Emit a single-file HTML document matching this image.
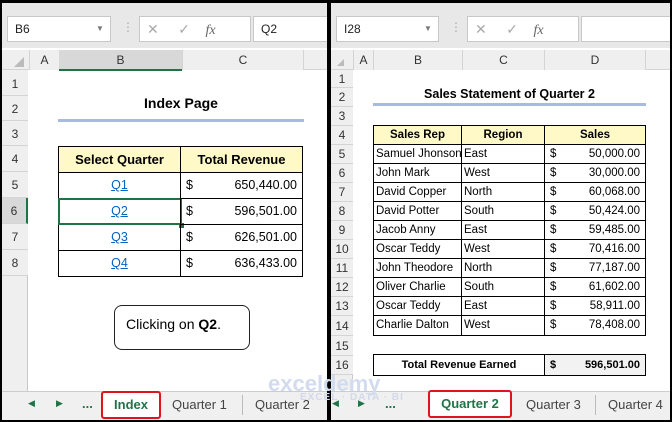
<!DOCTYPE html><html><head><style>
*{margin:0;padding:0;box-sizing:border-box}
body{width:672px;height:422px;background:#000;position:relative;overflow:hidden;font-family:"Liberation Sans",sans-serif;font-size:12px;color:#000}
.a{position:absolute}
.p{position:absolute;background:#fff;overflow:hidden}
.box{position:absolute;background:#fff;border:1px solid #c8c8c8;height:26px;top:13px;font-size:12px;line-height:24px;padding-left:7px;color:#222}
.hdr{background:#efefef;color:#333;text-align:center;font-size:12px}
.rh{position:absolute;background:#efefef;border-bottom:1px solid #d4d4d4;text-align:center;font-size:12px;color:#333}
.c{position:absolute;border:1px solid #000;font-size:12.5px;white-space:nowrap;overflow:hidden}
.tab{position:absolute;font-size:13px;color:#444;top:398px}
</style></head><body>
<div class="p" style="left:2px;top:3px;width:325px;height:417px;background:#fff">
 <div class="a" style="left:0;top:0;width:325px;height:45px;background:#e8e8e8"></div>
 <div class="box" style="left:5px;width:104px">B6<span class="a" style="left:88px;top:0;font-size:8px;color:#777">▼</span></div>
 <div class="a" style="left:120px;top:17px;color:#aaa">⋮</div>
 <div class="box" style="left:137px;width:112px;color:#aaa;font-size:14px">✕ &nbsp;&nbsp;&nbsp; ✓ &nbsp;&nbsp;&nbsp;<i style="font-family:'Liberation Serif';color:#666">fx</i></div>
 <div class="box" style="left:251px;width:80px">Q2</div>
 <div class="a hdr" style="left:0;top:47px;width:325px;height:20px;border-bottom:1px solid #d4d4d4"></div>
 <div class="a hdr" style="left:27px;top:47px;width:30px;height:20px;line-height:20px;border-left:1px solid #d4d4d4">A</div>
 <div class="a" style="left:57px;top:47px;width:123px;height:21px;line-height:20px;text-align:center;background:#d8d8d8;border-bottom:2px solid #217346;color:#333">B</div>
 <div class="a hdr" style="left:180px;top:47px;width:122px;height:20px;line-height:20px;border-left:1px solid #d4d4d4;border-right:1px solid #d4d4d4">C</div>
 <div class="a" style="left:12px;top:54px;width:0;height:0;border-left:10px solid transparent;border-bottom:10px solid #bbb"></div>
 <div class="a" style="left:0;top:67px;width:26px;height:350px;background:#efefef;border-right:1px solid #c8c8c8"></div>
 <div class="rh" style="left:0;top:67px;width:26px;height:26px;line-height:28px">1</div>
 <div class="rh" style="left:0;top:93px;width:26px;height:25px;line-height:26px">2</div>
 <div class="rh" style="left:0;top:118px;width:26px;height:25px;line-height:26px">3</div>
 <div class="rh" style="left:0;top:143px;width:26px;height:26px;line-height:26px">4</div>
 <div class="rh" style="left:0;top:169px;width:26px;height:26px;line-height:26px">5</div>
 <div class="rh" style="left:0;top:195px;width:26px;height:26px;line-height:26px;background:#d8d8d8;border-right:2px solid #217346">6</div>
 <div class="rh" style="left:0;top:221px;width:26px;height:26px;line-height:26px">7</div>
 <div class="rh" style="left:0;top:247px;width:26px;height:26px;line-height:26px">8</div>
 <div class="a" style="left:56px;top:92px;width:246px;text-align:center;font-weight:bold;font-size:14px">Index Page</div>
 <div class="a" style="left:56px;top:116px;width:246px;height:3px;background:#a9b9df"></div>
 <div class="c" style="left:56px;top:143px;width:123px;height:27px;background:#fff9c8;font-weight:bold;text-align:center;line-height:25px;font-size:13px">Select Quarter</div>
 <div class="c" style="left:178px;top:143px;width:123px;height:27px;background:#fff9c8;font-weight:bold;text-align:center;line-height:25px;font-size:13px">Total Revenue</div>
 <div class="c" style="left:56px;top:169px;width:123px;height:27px;text-align:center;line-height:25px;color:#0563c1;text-decoration:underline">Q1</div>
 <div class="c" style="left:56px;top:195px;width:123px;height:27px;text-align:center;line-height:25px;color:#0563c1;text-decoration:underline">Q2</div>
 <div class="c" style="left:56px;top:221px;width:123px;height:27px;text-align:center;line-height:25px;color:#0563c1;text-decoration:underline">Q3</div>
 <div class="c" style="left:56px;top:247px;width:123px;height:27px;text-align:center;line-height:25px;color:#0563c1;text-decoration:underline">Q4</div>
 <div class="a" style="left:56px;top:195px;width:124px;height:27px;border:2px solid #217346"></div>
 <div class="a" style="left:177px;top:220px;width:5px;height:5px;background:#217346"></div>
 <div class="c" style="left:178px;top:169px;width:123px;height:27px;line-height:25px;padding:0 5px"><span>$</span><span style="float:right">650,440.00</span></div>
 <div class="c" style="left:178px;top:195px;width:123px;height:27px;line-height:25px;padding:0 5px"><span>$</span><span style="float:right">596,501.00</span></div>
 <div class="c" style="left:178px;top:221px;width:123px;height:27px;line-height:25px;padding:0 5px"><span>$</span><span style="float:right">626,501.00</span></div>
 <div class="c" style="left:178px;top:247px;width:123px;height:27px;line-height:25px;padding:0 5px"><span>$</span><span style="float:right">636,433.00</span></div>
 <div class="a" style="left:112px;top:302px;width:136px;height:45px;border:1px solid #222;border-radius:8px;padding:10px 11px;font-size:14px">Clicking on <b>Q2</b>.</div>
 <div class="a" style="left:0;top:388px;width:325px;height:29px;background:#f0f0f0;border-top:1px solid #ccc"></div>
 <div class="tab" style="left:26px;top:395px;font-size:9px;color:#217346">◀</div>
 <div class="tab" style="left:54px;top:395px;font-size:9px;color:#217346">▶</div>
 <div class="tab" style="left:80px;top:393px;color:#217346;font-weight:bold">...</div>
 <div class="a" style="left:99px;top:388px;width:60px;height:28px;background:#fff;border:2px solid #e0141e;border-radius:3px;text-align:center;line-height:24px;font-weight:bold;color:#217346;font-size:13px">Index</div>
 <div class="tab" style="left:170px;top:394px">Quarter 1</div>
 <div class="a" style="left:240px;top:392px;width:1px;height:20px;background:#bbb"></div>
 <div class="tab" style="left:253px;top:394px">Quarter 2</div>
</div>
<div class="p" style="left:331px;top:3px;width:339px;height:417px">
 <div class="a" style="left:0;top:0;width:339px;height:45px;background:#e8e8e8"></div>
 <div class="box" style="left:5px;width:103px">I28<span class="a" style="left:87px;top:0;font-size:8px;color:#777">▼</span></div>
 <div class="a" style="left:119px;top:17px;color:#aaa">⋮</div>
 <div class="box" style="left:136px;width:112px;color:#aaa;font-size:14px">✕ &nbsp;&nbsp;&nbsp; ✓ &nbsp;&nbsp;&nbsp;<i style="font-family:'Liberation Serif';color:#666">fx</i></div>
 <div class="box" style="left:250px;width:100px"></div>
 <div class="a hdr" style="left:0;top:47px;width:339px;height:20px;border-bottom:1px solid #d4d4d4"></div>
 <div class="a" style="left:6px;top:56px;width:0;height:0;border-left:7px solid transparent;border-bottom:7px solid #bbb"></div>
 <div class="a hdr" style="left:22px;top:47px;width:20px;height:20px;line-height:20px;border-left:1px solid #d4d4d4">A</div>
 <div class="a hdr" style="left:42px;top:47px;width:89px;height:20px;line-height:20px;border-left:1px solid #d4d4d4">B</div>
 <div class="a hdr" style="left:131px;top:47px;width:82px;height:20px;line-height:20px;border-left:1px solid #d4d4d4">C</div>
 <div class="a hdr" style="left:213px;top:47px;width:102px;height:20px;line-height:20px;border-left:1px solid #d4d4d4;border-right:1px solid #d4d4d4">D</div>
 <div class="a" style="left:0;top:67px;width:22px;height:320px;background:#efefef;border-right:1px solid #c8c8c8"></div>
 <div class="rh" style="left:0;top:67px;width:22px;height:18px;line-height:19px">1</div>
 <div class="rh" style="left:0;top:85px;width:22px;height:19px;line-height:19px">2</div>
 <div class="rh" style="left:0;top:104px;width:22px;height:19px;line-height:19px">3</div>
 <div class="rh" style="left:0;top:123px;width:22px;height:19px;line-height:19px">4</div>
 <div class="rh" style="left:0;top:142px;width:22px;height:19px;line-height:19px">5</div>
 <div class="rh" style="left:0;top:161px;width:22px;height:19px;line-height:19px">6</div>
 <div class="rh" style="left:0;top:180px;width:22px;height:19px;line-height:19px">7</div>
 <div class="rh" style="left:0;top:199px;width:22px;height:19px;line-height:19px">8</div>
 <div class="rh" style="left:0;top:218px;width:22px;height:19px;line-height:19px">9</div>
 <div class="rh" style="left:0;top:237px;width:22px;height:19px;line-height:19px">10</div>
 <div class="rh" style="left:0;top:256px;width:22px;height:19px;line-height:19px">11</div>
 <div class="rh" style="left:0;top:275px;width:22px;height:19px;line-height:19px">12</div>
 <div class="rh" style="left:0;top:294px;width:22px;height:19px;line-height:19px">13</div>
 <div class="rh" style="left:0;top:313px;width:22px;height:20px;line-height:20px">14</div>
 <div class="rh" style="left:0;top:333px;width:22px;height:20px;line-height:20px">15</div>
 <div class="rh" style="left:0;top:353px;width:22px;height:19px;line-height:19px">16</div>
 <div class="a" style="left:42px;top:84px;width:273px;text-align:center;font-weight:bold;font-size:12.5px">Sales Statement of Quarter 2</div>
 <div class="a" style="left:42px;top:100px;width:273px;height:3px;background:#a9b9df"></div>
 <div id="rt"></div>
 <div class="a" style="left:0;top:388px;width:339px;height:29px;background:#f0f0f0;border-top:1px solid #ccc"></div>
 <div class="tab" style="left:1px;top:395px;font-size:9px;color:#217346">◀</div>
 <div class="tab" style="left:27px;top:395px;font-size:9px;color:#217346">▶</div>
 <div class="tab" style="left:54px;top:393px;color:#217346;font-weight:bold">...</div>
 <div class="a" style="left:97px;top:387px;width:84px;height:28px;background:#fff;border:2px solid #e0141e;border-radius:3px;text-align:center;line-height:24px;font-weight:bold;color:#217346;font-size:13px">Quarter 2</div>
 <div class="tab" style="left:195px;top:394px">Quarter 3</div>
 <div class="a" style="left:264px;top:392px;width:1px;height:20px;background:#bbb"></div>
 <div class="tab" style="left:277px;top:394px">Quarter 4</div>
</div>
<div class="a" style="left:300px;top:392px;font-size:10px;color:#d3d9e8;font-weight:bold;letter-spacing:1px">EXCEL · DATA · BI</div>
<div class="a" style="left:268px;top:371px;font-size:22px;color:#d3dbee;font-weight:bold">exceldemy</div>
<script>
var d=[["Samuel Jhonson","East","50,000.00"],["John Mark","West","30,000.00"],["David Copper","North","60,068.00"],["David Potter","South","50,424.00"],["Jacob Anny","East","59,485.00"],["Oscar Teddy","West","70,416.00"],["John Theodore","North","77,187.00"],["Oliver Charlie","South","61,602.00"],["Oscar Teddy","East","58,911.00"],["Charlie Dalton","West","78,408.00"]];
var h='';function c(x,y,w,hh,s,st){h+='<div class="c" style="left:'+x+'px;top:'+y+'px;width:'+w+'px;height:'+hh+'px;line-height:'+(hh-2)+'px;font-size:11.5px;'+(st||'')+'">'+s+'</div>';}
c(42,122,89,20,'Sales Rep','background:#fff9c8;font-weight:bold;text-align:center');
c(130,122,84,20,'Region','background:#fff9c8;font-weight:bold;text-align:center');
c(213,122,102,20,'Sales','background:#fff9c8;font-weight:bold;text-align:center');
d.forEach(function(r,i){var y=141+i*19,hh=i==9?21:20;c(42,y,89,hh,r[0],'padding-left:2px');c(130,y,84,hh,r[1],'padding-left:2px');c(213,y,102,hh,'<span>$</span><span style="float:right">'+r[2]+'</span>','padding:0 5px');});
c(42,351,172,22,'Total Revenue Earned','font-weight:bold;text-align:center;font-size:11px');
c(213,351,102,22,'<span>$</span><span style="float:right">596,501.00</span>','padding:0 5px;font-weight:bold;font-size:11px;background:#f2f2f2');
document.getElementById('rt').innerHTML=h;
</script>
</body></html>
